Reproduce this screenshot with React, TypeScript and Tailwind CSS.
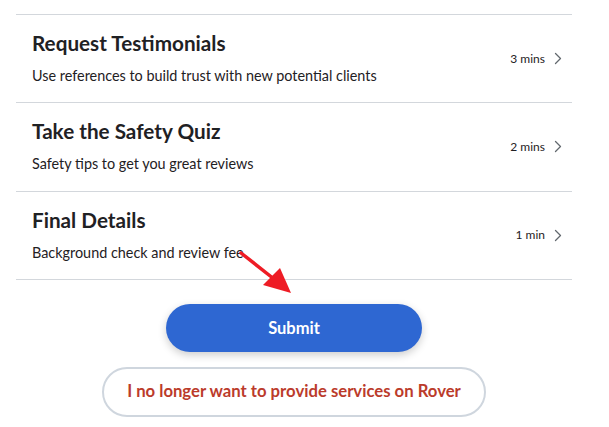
import React from "react";

const rows = [
  { title: "Request Testimonials", sub: "Use references to build trust with new potential clients", time: "3 mins" },
  { title: "Take the Safety Quiz", sub: "Safety tips to get you great reviews", time: "2 mins" },
  { title: "Final Details", sub: "Background check and review fee", time: "1 min" },
];

function Chevron() {
  return (
    <svg width="8" height="13" viewBox="0 0 8 13" fill="none">
      <path d="M1.5 1.5 L6.5 6.5 L1.5 11.5" stroke="#62686e" strokeWidth="1.3" strokeLinecap="round" strokeLinejoin="round" />
    </svg>
  );
}

export default function App() {
  return (
    <div className="relative w-[609px] h-[427px] bg-white overflow-hidden" style={{ fontFamily: "Lato, 'Open Sans', sans-serif" }}>
      <div className="pt-[14px] px-4 w-[588px]">
        <div className="border-t border-[#d3d7dc]">
          {rows.map((r) => (
            <div key={r.title} className="flex items-start justify-between border-b border-[#d3d7dc] pl-4 pr-[10px] h-[88.34px]">
              <div className="flex flex-col pt-[14px]">
                <div className="text-[20.7px] leading-[28px] font-bold text-[#1f2124]">{r.title}</div>
                <div className="mt-[9px] text-[14.4px] leading-[20px] text-[#1f2124]">{r.sub}</div>
              </div>
              <div className="flex items-center gap-[9px] self-center">
                <span className="text-[12px] text-[#1f2124]">{r.time}</span>
                <Chevron />
              </div>
            </div>
          ))}
        </div>
      </div>
      <div className="flex flex-col items-center mt-[24px] ml-[6px] w-[576px]">
        <button className="w-[256px] h-[48px] rounded-full bg-[#2e67d2] text-white text-[16.5px] font-bold shadow-[0_3px_8px_rgba(0,0,0,0.2)]">
          Submit
        </button>
        <button className="mt-[15px] w-[384px] h-[50px] rounded-full border-2 border-[#cfd6de] bg-white text-[#bb3b2b] text-[16.7px] font-bold">
          I no longer want to provide services on Rover
        </button>
      </div>
      <svg className="absolute left-0 top-0" width="609" height="427" viewBox="0 0 609 427" style={{ pointerEvents: "none" }}>
        <line x1="241" y1="253" x2="274" y2="279" stroke="#ee1c25" strokeWidth="3.5" strokeLinecap="round" />
        <polygon points="291,293 263,285 280,268" fill="#ee1c25" />
      </svg>
    </div>
  );
}
